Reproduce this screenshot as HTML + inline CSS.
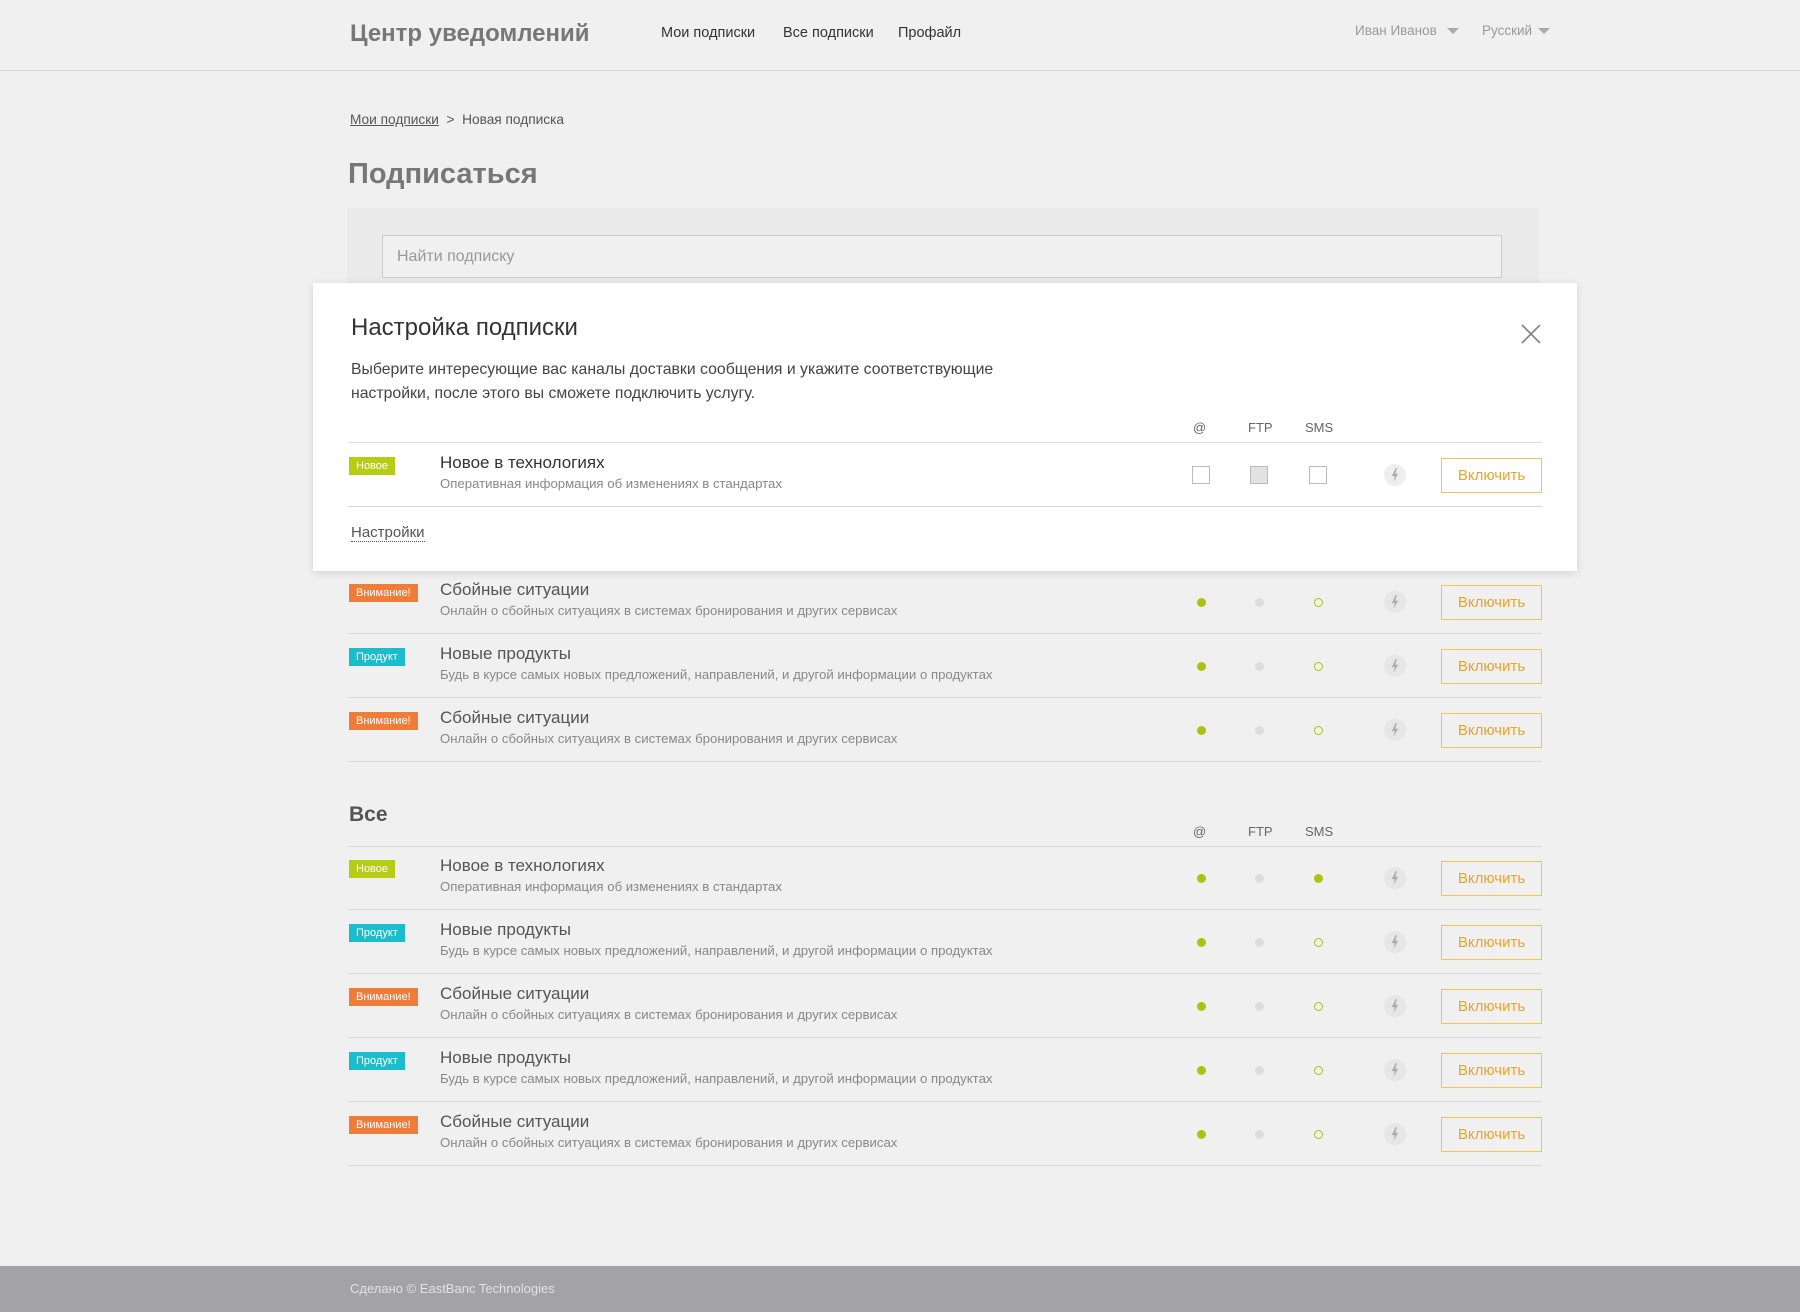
<!DOCTYPE html>
<html><head><meta charset="utf-8">
<style>
*{margin:0;padding:0;box-sizing:border-box}
body{width:1800px;height:1312px;background:#f0f0f0;font-family:"Liberation Sans",Arial,sans-serif;position:relative;overflow:hidden;color:#555}
.a{position:absolute;white-space:nowrap}
.hdr{position:absolute;left:0;top:0;width:1800px;height:71px;border-bottom:1px solid #d4d4d4}
.tri{display:inline-block;width:0;height:0;border-left:6px solid transparent;border-right:6px solid transparent;border-top:6px solid #aaa;vertical-align:middle;margin-left:10px}
.row{position:absolute;left:348px;width:1194px;height:64px;border-bottom:1px solid #d8d8d8}
.badge{position:absolute;left:1px;top:14px;height:18px;line-height:18px;padding:0 7px;color:#fff;font-size:11px}
.new{background:#b7cc14}.warn{background:#f07c3a}.prod{background:#1bbccb}
.t{position:absolute;left:92px;top:10px;font-size:17px;color:#555}
.d{position:absolute;left:92px;top:33px;font-size:13.2px;color:#888}
.dot{position:absolute;top:28px;width:9px;height:9px;border-radius:50%}
.g{background:#a9c40e}.gr{background:#ddd}.o{border:1.3px solid #a9c40e}
.c1{left:849px}.c2{left:907px}.c3{left:966px}
.bolt{position:absolute;left:1036px;top:21px;width:22px;height:22px;border-radius:50%;background:#e6e6e6}
.bolt::after{content:"";position:absolute;left:7px;top:4px;width:8px;height:14px;background:#aaa;clip-path:polygon(60% 0,10% 58%,48% 58%,30% 100%,90% 40%,52% 40%,75% 0)}
.btn{position:absolute;left:1093px;top:15px;width:101px;height:35px;border:1px solid #f0c257;color:#e6a52a;font-size:15px;text-align:center;line-height:33px}
.cb{position:absolute;top:23px;width:18px;height:18px;border:1px solid #bbb;background:#fff}
.ch{position:absolute;font-size:13px;color:#666}
</style></head><body>
<div class="hdr"></div>
<div class="a" style="left:350px;top:20px;font-size:24px;font-weight:bold;color:#777">Центр уведомлений</div>
<div class="a" style="left:661px;top:25px;font-size:14.5px;color:#333">Мои подписки</div>
<div class="a" style="left:783px;top:25px;font-size:14.5px;color:#333">Все подписки</div>
<div class="a" style="left:898px;top:25px;font-size:14.5px;color:#333">Профайл</div>
<div class="a" style="left:1355px;top:23px;font-size:13.5px;color:#999">Иван Иванов<span class="tri"></span></div>
<div class="a" style="left:1482px;top:23px;font-size:13.5px;color:#999">Русский<span class="tri" style="margin-left:6px"></span></div>
<div class="a" style="left:350px;top:112px;font-size:13.7px;color:#555"><span style="text-decoration:underline">Мои подписки</span>&nbsp; &gt; &nbsp;Новая подписка</div>
<div class="a" style="left:348px;top:158px;font-size:29px;font-weight:bold;color:#777">Подписаться</div>
<div class="a" style="left:347px;top:208px;width:1192px;height:80px;background:#eaeaea"></div>
<div class="a" style="left:382px;top:235px;width:1120px;height:43px;border:1px solid #ccc;background:#f0f0f0;font-size:16px;color:#999;padding:12px 14px">Найти подписку</div>

<div class="row" style="top:570px"><span class="badge warn">Внимание!</span><div class="t">Сбойные ситуации</div><div class="d">Онлайн о сбойных ситуациях в системах бронирования и других сервисах</div><i class="dot g c1"></i><i class="dot gr c2"></i><i class="dot o c3"></i><div class="bolt"></div><div class="btn">Включить</div></div>
<div class="row" style="top:634px"><span class="badge prod">Продукт</span><div class="t">Новые продукты</div><div class="d">Будь в курсе самых новых предложений, направлений, и другой информации о продуктах</div><i class="dot g c1"></i><i class="dot gr c2"></i><i class="dot o c3"></i><div class="bolt"></div><div class="btn">Включить</div></div>
<div class="row" style="top:698px"><span class="badge warn">Внимание!</span><div class="t">Сбойные ситуации</div><div class="d">Онлайн о сбойных ситуациях в системах бронирования и других сервисах</div><i class="dot g c1"></i><i class="dot gr c2"></i><i class="dot o c3"></i><div class="bolt"></div><div class="btn">Включить</div></div>

<div class="a" style="left:349px;top:803px;font-size:21px;color:#555;font-weight:bold">Все</div>
<div class="ch" style="left:1193px;top:824px">@</div>
<div class="ch" style="left:1248px;top:824px">FTP</div>
<div class="ch" style="left:1305px;top:824px">SMS</div>
<div class="a" style="left:348px;top:846px;width:1194px;border-top:1px solid #d8d8d8"></div>
<div class="row" style="top:846px"><span class="badge new">Новое</span><div class="t">Новое в технологиях</div><div class="d">Оперативная информация об изменениях в стандартах</div><i class="dot g c1"></i><i class="dot gr c2"></i><i class="dot g c3"></i><div class="bolt"></div><div class="btn">Включить</div></div>
<div class="row" style="top:910px"><span class="badge prod">Продукт</span><div class="t">Новые продукты</div><div class="d">Будь в курсе самых новых предложений, направлений, и другой информации о продуктах</div><i class="dot g c1"></i><i class="dot gr c2"></i><i class="dot o c3"></i><div class="bolt"></div><div class="btn">Включить</div></div>
<div class="row" style="top:974px"><span class="badge warn">Внимание!</span><div class="t">Сбойные ситуации</div><div class="d">Онлайн о сбойных ситуациях в системах бронирования и других сервисах</div><i class="dot g c1"></i><i class="dot gr c2"></i><i class="dot o c3"></i><div class="bolt"></div><div class="btn">Включить</div></div>
<div class="row" style="top:1038px"><span class="badge prod">Продукт</span><div class="t">Новые продукты</div><div class="d">Будь в курсе самых новых предложений, направлений, и другой информации о продуктах</div><i class="dot g c1"></i><i class="dot gr c2"></i><i class="dot o c3"></i><div class="bolt"></div><div class="btn">Включить</div></div>
<div class="row" style="top:1102px"><span class="badge warn">Внимание!</span><div class="t">Сбойные ситуации</div><div class="d">Онлайн о сбойных ситуациях в системах бронирования и других сервисах</div><i class="dot g c1"></i><i class="dot gr c2"></i><i class="dot o c3"></i><div class="bolt"></div><div class="btn">Включить</div></div>

<div class="a" style="left:313px;top:283px;width:1264px;height:288px;background:#fff;box-shadow:0 2px 8px rgba(0,0,0,0.12)"></div>
<div class="a" style="left:351px;top:314px;font-size:24px;color:#333">Настройка подписки</div>
<svg class="a" style="left:1521px;top:324px" width="20" height="20" viewBox="0 0 20 20"><path d="M1 1L19 19M19 1L1 19" stroke="#888" stroke-width="1.8"/></svg>
<div class="a" style="left:351px;top:358px;font-size:15.8px;line-height:24px;color:#444">Выберите интересующие вас каналы доставки сообщения и укажите соответствующие<br>настройки, после этого вы сможете подключить услугу.</div>
<div class="ch" style="left:1193px;top:420px">@</div>
<div class="ch" style="left:1248px;top:420px">FTP</div>
<div class="ch" style="left:1305px;top:420px">SMS</div>
<div class="row" style="top:442px;border-top:1px solid #ddd;height:65px"><span class="badge new">Новое</span><div class="t" style="color:#333">Новое в технологиях</div><div class="d">Оперативная информация об изменениях в стандартах</div>
<i class="cb" style="left:844px"></i><i class="cb" style="left:902px;background:#e2e2e2"></i><i class="cb" style="left:961px"></i>
<div class="bolt" style="background:#eee"></div><div class="btn">Включить</div></div>
<div class="a" style="left:351px;top:524px;font-size:15px;color:#555;border-bottom:1px dotted #555;line-height:17px">Настройки</div>

<div class="a" style="left:0;top:1266px;width:1800px;height:46px;background:#a3a3a5"></div>
<div class="a" style="left:350px;top:1281px;font-size:13px;color:#e2e2e2">Сделано © EastBanc Technologies</div>
</body></html>
